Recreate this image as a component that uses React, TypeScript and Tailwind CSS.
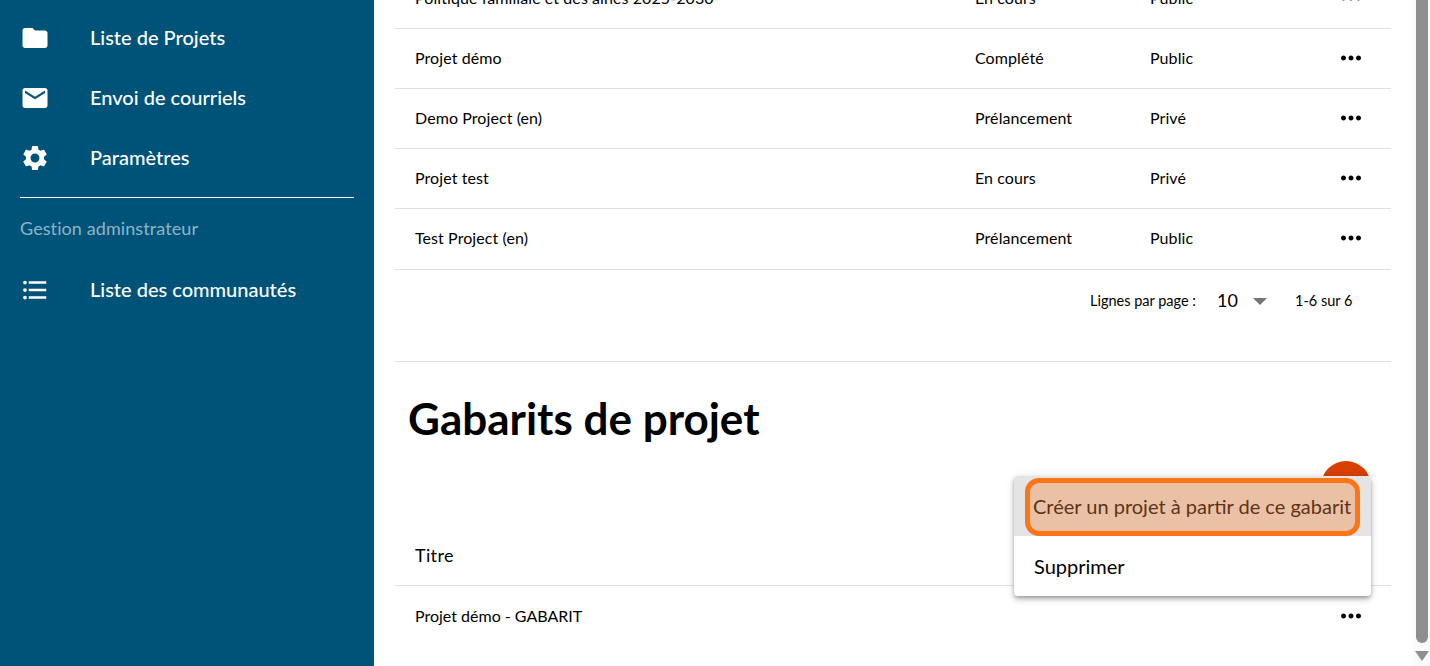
const P = {
  folder: "M10 4H4c-1.1 0-1.99.9-1.99 2L2 18c0 1.1.9 2 2 2h16c1.1 0 2-.9 2-2V8c0-1.1-.9-2-2-2h-8l-2-2z",
  mail: "M20 4H4c-1.1 0-1.99.9-1.99 2L2 18c0 1.1.9 2 2 2h16c1.1 0 2-.9 2-2V6c0-1.1-.9-2-2-2zm0 4l-8 5-8-5V6l8 5 8-5v2z",
  gear: "M19.14 12.94c.04-.3.06-.61.06-.94 0-.32-.02-.64-.07-.94l2.03-1.58c.18-.14.23-.41.12-.61l-1.92-3.32c-.12-.22-.37-.29-.59-.22l-2.39.96c-.5-.38-1.03-.7-1.62-.94l-.36-2.54c-.04-.24-.24-.41-.48-.41h-3.84c-.24 0-.43.17-.47.41l-.36 2.54c-.59.24-1.13.57-1.62.94l-2.39-.96c-.22-.08-.47 0-.59.22L2.74 8.87c-.12.21-.08.47.12.61l2.03 1.58c-.05.3-.09.63-.09.94s.02.64.07.94l-2.03 1.58c-.18.14-.23.41-.12.61l1.92 3.32c.12.22.37.29.59.22l2.39-.96c.5.38 1.03.7 1.62.94l.36 2.54c.05.24.24.41.48.41h3.84c.24 0 .44-.17.47-.41l.36-2.54c.59-.24 1.13-.56 1.62-.94l2.39.96c.22.08.47 0 .59-.22l1.92-3.32c.12-.22.07-.47-.12-.61l-2.01-1.58zM12 15.6c-1.98 0-3.6-1.62-3.6-3.6s1.62-3.6 3.6-3.6 3.6 1.62 3.6 3.6-1.62 3.6-3.6 3.6z",
  list: "M4 10.5c-.83 0-1.5.67-1.5 1.5s.67 1.5 1.5 1.5 1.5-.67 1.5-1.5-.67-1.5-1.5-1.5zm0-6c-.83 0-1.5.67-1.5 1.5S3.17 7.5 4 7.5 5.5 6.83 5.5 6 4.83 4.5 4 4.5zm0 12c-.83 0-1.5.68-1.5 1.5s.68 1.5 1.5 1.5 1.5-.68 1.5-1.5-.67-1.5-1.5-1.5zM7 19h14v-2H7v2zm0-6h14v-2H7v2zm0-8v2h14V5H7z",
  more: "M6 10c-1.1 0-2 .9-2 2s.9 2 2 2 2-.9 2-2-.9-2-2-2zm12 0c-1.1 0-2 .9-2 2s.9 2 2 2 2-.9 2-2-.9-2-2-2zm-6 0c-1.1 0-2 .9-2 2s.9 2 2 2 2-.9 2-2-.9-2-2-2z",
};

function Icon({ d, className }: { d: string; className: string }) {
  return (
    <svg viewBox="0 0 24 24" fill="currentColor" className={className}>
      <path d={d} />
    </svg>
  );
}

function NavItem({ icon, label }: { icon: string; label: string }) {
  return (
    <div className="flex h-[60px] items-center pl-5">
      <Icon d={icon} className="h-[30px] w-[30px] shrink-0 text-white" />
      <span className="ml-10 -translate-y-px text-[20px] font-medium text-white">{label}</span>
    </div>
  );
}

const rows = [
  ["Politique familiale et des aînés 2025-2030", "En cours", "Public", "h-[60px] pb-px"],
  ["Projet démo", "Complété", "Public", "h-[60px] pb-px"],
  ["Demo Project (en)", "Prélancement", "Privé", "h-[60px] pb-px"],
  ["Projet test", "En cours", "Privé", "h-[60px] pb-px"],
  ["Test Project (en)", "Prélancement", "Public", "h-[61px] pb-[2px]"],
];

function Row({ cells }: { cells: string[] }) {
  return (
    <div className={`grid ${cells[3]} grid-cols-[560px_175px_1fr_70px] items-center border-b border-[#e0e0e0] pl-5 text-[16px] tracking-[0.005em] text-black`}>
      <span>{cells[0]}</span>
      <span>{cells[1]}</span>
      <span>{cells[2]}</span>
      <Icon d={P.more} className="ml-[15px] h-[30px] w-[30px]" />
    </div>
  );
}

export default function App() {
  return (
    <div className="flex h-[666px] w-[1430px] overflow-hidden bg-white font-['Lato','Carlito','Open_Sans',sans-serif]">
      <aside className="h-full w-[374px] shrink-0 bg-[#005378]">
        <div className="pt-[8px]">
          <NavItem icon={P.folder} label="Liste de Projets" />
          <NavItem icon={P.mail} label="Envoi de courriels" />
          <NavItem icon={P.gear} label="Paramètres" />
        </div>
        <div className="mx-5 mt-[9px] h-px bg-white" />
        <div className="mt-[19px] pl-5 text-[18px] leading-[22px] tracking-[0.005em] text-[#8fb3c6]">Gestion adminstrateur</div>
        <div className="mt-[21px]">
          <NavItem icon={P.list} label="Liste des communautés" />
        </div>
      </aside>

      <main className="relative w-[1039px] shrink-0 overflow-hidden pl-[21px] pr-[22px]">
        <div className="-mt-[31px]">
          {rows.map((r) => (
            <Row key={r[0]} cells={r} />
          ))}
        </div>

        <div className="flex h-[60px] items-center pl-[695px] pt-[2px] text-[14.5px] text-black">
          <span>Lignes par page :</span>
          <span className="ml-[21px] w-[21px] -translate-y-px text-[18px]">10</span>
          <svg viewBox="0 0 14 7" className="ml-[15px] h-[7px] w-[14px]" fill="#757575">
            <path d="M0 0h14L7 7z" />
          </svg>
          <span className="ml-[28px]">1-6 sur 6</span>
        </div>

        <div className="mt-[31px] h-px bg-[#e0e0e0]" />

        <h1 className="mt-[24px] pl-[13px] text-[44px] font-bold leading-[64px] text-black">Gabarits de projet</h1>

        <div className="mt-[75px] flex h-[61px] items-center border-b border-[#e0e0e0] pl-5 text-[18px] tracking-[0.02em] text-black">Titre</div>

        <div className="grid h-[60px] grid-cols-[1fr_70px] items-center pl-5 text-[16px] text-black">
          <span>Projet démo - GABARIT</span>
          <Icon d={P.more} className="ml-[15px] h-[30px] w-[30px]" />
        </div>

        <div className="absolute left-[947px] top-[461px] h-[50px] w-[50px] rounded-full bg-[#d84000]" />

        <div className="absolute left-[640px] top-[476px] w-[357px] overflow-hidden rounded bg-white shadow-[0_2px_4px_-1px_rgba(0,0,0,0.3),0_4px_5px_0_rgba(0,0,0,0.14),0_1px_10px_0_rgba(0,0,0,0.12)]">
          <div className="h-[60px] bg-[#e4e4e4] pl-[11px] pr-[11px] pt-[2px]">
            <div className="flex h-[58px] items-center rounded-[14px] border-[5px] border-[#fd7517] bg-[#ebc1a5] pb-[2px] pl-[3px] text-[20px] whitespace-nowrap text-[#5c3319]">
              Créer un projet à partir de ce gabarit
            </div>
          </div>
          <div className="flex h-[60px] items-center pl-5 text-[20px] text-black">Supprimer</div>
        </div>
      </main>

      <div className="flex h-full flex-1 flex-col items-center bg-[#fafafa]">
        <div className="h-[643px] w-[12px] rounded-b-full bg-[#8f8f8f]" />
        <svg viewBox="0 0 14 10" className="mt-[8px] h-[10px] w-[14px]" fill="#8f8f8f">
          <path d="M0 0h14L7 10z" />
        </svg>
      </div>
    </div>
  );
}
